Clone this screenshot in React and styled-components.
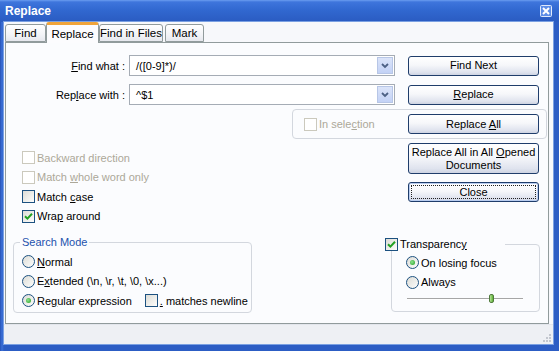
import React from "react";
import styled, { createGlobalStyle } from "styled-components";

const Global = createGlobalStyle`
  html, body { margin: 0; padding: 0; background: #fff; }
  body {
    font-family: "Liberation Sans", Arial, sans-serif;
    font-size: 11px;
    color: #000;
    white-space: nowrap;
  }
`;

const Window = styled.div`
  width: 559px;
  height: 351px;
  display: flex;
  flex-direction: column;
  overflow: hidden;
  background: #2c5dc4;
`;

const TitleBar = styled.div`
  height: 22px;
  flex: none;
  display: flex;
  align-items: center;
  justify-content: space-between;
  padding: 0 7px 0 5px;
  background: linear-gradient(#6b9df0 0, #3e75dc 2px, #3168d0 10px, #2a5bc1 100%);
  color: #fff;
  font-weight: bold;
  font-size: 12px;
`;

const Frame = styled.div`
  flex: 1;
  min-height: 0;
  display: flex;
  padding: 0 6px 7px 4px;
  background: linear-gradient(90deg, #2652b6 0, #3b70d8 2px, #2c5dc4 4px);
`;

const Client = styled.div`
  flex: 1;
  display: flex;
  flex-direction: column;
  background: #f7f8fb;
  box-shadow: 0 0 0 1px #7aa0e2;
`;

const TabStrip = styled.div`
  height: 20px;
  flex: none;
  display: flex;
  align-items: flex-end;
  padding-left: 1px;
  position: relative;
  z-index: 1;
`;

const Tab = styled.div`
  width: ${(p) => p.$w}px;
  height: ${(p) => (p.$active ? 21 : 18)}px;
  margin-bottom: ${(p) => (p.$active ? -1 : 0)}px;
  margin-right: ${(p) => p.$gap || 0}px;
  box-sizing: border-box;
  border: 1px solid #919b9c;
  border-bottom: ${(p) => (p.$active ? "none" : "1px solid #919b9c")};
  border-top: ${(p) => (p.$active ? "3px solid #f0a43a" : "1px solid #919b9c")};
  border-radius: 3px 3px 0 0;
  background: ${(p) => (p.$active ? "#fcfcfe" : "linear-gradient(#ffffff, #f3f4f7 60%, #e6e8ee)")};
  display: flex;
  align-items: center;
  justify-content: center;
  font-size: 11.5px;
  padding-bottom: ${(p) => (p.$active ? 1 : 0)}px;
`;

const Panel = styled.div`
  height: 282px;
  box-sizing: border-box;
  margin: 0 4px 0 1px;
  border: 1px solid #919b9c;
  background: #fbfcfe;
  padding-top: 12px;
  display: flex;
  flex-direction: column;
`;

const Row = styled.div`
  display: flex;
  align-items: center;
  height: 21px;
  margin-top: ${(p) => p.$top || 0}px;
`;

const Label = styled.div`
  width: 119px;
  margin-right: 4px;
  text-align: right;
  flex: none;
`;

const Key = styled.span`
  text-decoration: underline;
`;

const Combo = styled.div`
  width: 266px;
  height: 21px;
  box-sizing: border-box;
  border: 1px solid #a5acb5;
  background: #fff;
  display: flex;
  flex: none;
`;

const ComboText = styled.div`
  flex: 1;
  padding-left: 6px;
  display: flex;
  align-items: center;
`;

const ComboArrow = styled.div`
  width: 16px;
  margin: 1px;
  box-sizing: border-box;
  border: 1px solid #b7c6e6;
  background: linear-gradient(#dbe4f9, #c3d2f6);
  display: flex;
  align-items: center;
  justify-content: center;
`;

const Button = styled.div`
  width: 131px;
  height: ${(p) => p.$h || 20}px;
  margin-left: ${(p) => p.$left ?? 13}px;
  flex: none;
  box-sizing: border-box;
  border: 1px solid #1f3d6b;
  border-radius: 3px;
  background: linear-gradient(#ffffff, #f6f7fa 45%, #dfe3ee 85%, #cdd3e2);
  display: flex;
  align-items: center;
  justify-content: center;
  text-align: center;
  line-height: 13px;
  ${(p) =>
    p.$focus &&
    `
    box-shadow: inset 0 0 0 1px #b9cdf0;
    outline: 1px dotted #222;
    outline-offset: -4px;
  `}
`;

const SelGroup = styled.div`
  margin: 4px 0 0 286px;
  width: 255px;
  height: 30px;
  box-sizing: border-box;
  border: 1px solid #d3d7de;
  border-radius: 4px;
  display: flex;
  align-items: center;
  justify-content: space-between;
  padding: 0 7px 0 11px;
`;

const Options = styled.div`
  display: flex;
  margin-top: 4px;
  height: 83px;
`;

const CheckCol = styled.div`
  flex: 1;
  padding: 5px 0 0 16px;
`;

const ButtonCol = styled.div`
  width: 131px;
  margin-right: 9px;
  display: flex;
  flex-direction: column;
  gap: 8px;
`;

const Item = styled.div`
  display: flex;
  align-items: center;
  height: 19.5px;
  gap: 2px;
  color: ${(p) => (p.$disabled ? "#aca899" : "#000")};
  margin-left: ${(p) => p.$left || 0}px;
`;

const Box = styled.span`
  width: 13px;
  height: 13px;
  flex: none;
  box-sizing: border-box;
  border: 1px solid ${(p) => (p.$disabled ? "#cbc9bd" : "#1c5180")};
  background: ${(p) => (p.$disabled ? "#fff" : "linear-gradient(135deg, #dcdcd6, #fdfdfc)")};
  display: flex;
  align-items: center;
  justify-content: center;
`;

const Radio = styled.span`
  width: 13px;
  height: 13px;
  flex: none;
  box-sizing: border-box;
  border-radius: 50%;
  border: 1px solid #1c5180;
  background: linear-gradient(135deg, #dcdcd6, #fdfdfc);
  display: flex;
  align-items: center;
  justify-content: center;
`;

const Dot = styled.span`
  width: 5px;
  height: 5px;
  border-radius: 50%;
  background: radial-gradient(circle at 40% 40%, #8fe28f, #1f9f1f);
`;

const Bottom = styled.div`
  display: flex;
  align-items: flex-start;
  margin-top: 10px;
`;

const Group = styled.fieldset`
  margin: ${(p) => p.$margin};
  width: ${(p) => p.$w}px;
  box-sizing: border-box;
  border: 1px solid #d3d7de;
  border-radius: 4px;
  padding: ${(p) => p.$pad};
  min-width: 0;
`;

const Legend = styled.legend`
  padding: 0 2px;
  margin-left: -2px;
  color: #2352ad;
  line-height: 13px;
`;

const CheckLegend = styled.legend`
  padding: 0;
  margin-left: -21px;
  width: 120px;
  line-height: 13px;
  display: flex;
  align-items: center;
  gap: 2px;
`;

const Slider = styled.div`
  width: 116px;
  height: 14px;
  margin-left: 1px;
  position: relative;
  display: flex;
  align-items: center;
`;

const Track = styled.div`
  flex: 1;
  height: 0;
  border-top: 1px solid #a6a6a6;
  border-bottom: 1px solid #fff;
`;

const Thumb = styled.div`
  position: absolute;
  left: 82px;
  top: 2px;
  width: 5px;
  height: 9px;
  box-sizing: border-box;
  border: 1px solid #4f7a3c;
  border-radius: 2px;
  background: linear-gradient(90deg, #b7e39a, #5cb135);
`;

const StatusBar = styled.div`
  flex: 1;
  display: flex;
  justify-content: flex-end;
  align-items: flex-end;
  background: #eef0f4;
  border-top: 1px solid #e3e6ec;
  padding: 0 1px 1px 0;
`;

const Check = () => (
  <svg width="9" height="9" viewBox="0 0 9 9">
    <path d="M1 4.2 L3.4 6.6 L8 1.8" fill="none" stroke="#21a121" strokeWidth="2" />
  </svg>
);

const Chevron = () => (
  <svg width="8" height="6" viewBox="0 0 8 6">
    <path d="M1 1 L4 4 L7 1" fill="none" stroke="#4d6185" strokeWidth="1.8" />
  </svg>
);

const CloseIcon = () => (
  <svg width="12" height="12" viewBox="0 0 12 12">
    <rect x="0.5" y="0.5" width="11" height="11" rx="1" fill="#5d8de6" stroke="#dfe9fb" />
    <path d="M3 3 L9 9 M9 3 L3 9" stroke="#fff" strokeWidth="2" />
  </svg>
);

const Grip = () => (
  <svg width="10" height="10" viewBox="0 0 10 10">
    {[
      [8, 2],
      [5, 5],
      [8, 5],
      [2, 8],
      [5, 8],
      [8, 8],
    ].map(([x, y]) => (
      <rect key={`${x}-${y}`} x={x - 1} y={y - 1} width="2" height="2" fill="#c3c7cf" />
    ))}
  </svg>
);

export default function App() {
  return (
    <Window>
      <Global />
      <TitleBar>
        <span>Replace</span>
        <CloseIcon />
      </TitleBar>
      <Frame>
        <Client>
          <TabStrip>
            <Tab $w={41}>Find</Tab>
            <Tab $w={53} $active>
              Replace
            </Tab>
            <Tab $w={64} $gap={2}>
              Find in Files
            </Tab>
            <Tab $w={39}>Mark</Tab>
          </TabStrip>
          <Panel>
            <Row>
              <Label>
                <Key>F</Key>ind what :
              </Label>
              <Combo>
                <ComboText>/([0-9]*)/</ComboText>
                <ComboArrow>
                  <Chevron />
                </ComboArrow>
              </Combo>
              <Button>Find Next</Button>
            </Row>
            <Row $top={8}>
              <Label>
                Rep<Key>l</Key>ace with :
              </Label>
              <Combo>
                <ComboText>^$1</ComboText>
                <ComboArrow>
                  <Chevron />
                </ComboArrow>
              </Combo>
              <Button>
                <span>
                  <Key>R</Key>eplace
                </span>
              </Button>
            </Row>
            <SelGroup>
              <Item $disabled>
                <Box $disabled />
                <span>
                  In sele<Key>c</Key>tion
                </span>
              </Item>
              <Button $left={0}>
                <span>
                  Replace <Key>A</Key>ll
                </span>
              </Button>
            </SelGroup>
            <Options>
              <CheckCol>
                <Item $disabled>
                  <Box $disabled />
                  <span>Backward direction</span>
                </Item>
                <Item $disabled>
                  <Box $disabled />
                  <span>
                    Match <Key>w</Key>hole word only
                  </span>
                </Item>
                <Item>
                  <Box />
                  <span>
                    Match <Key>c</Key>ase
                  </span>
                </Item>
                <Item>
                  <Box>
                    <Check />
                  </Box>
                  <span>
                    Wra<Key>p</Key> around
                  </span>
                </Item>
              </CheckCol>
              <ButtonCol>
                <Button $left={0} $h={31}>
                  <span>
                    Replace All in All <Key>O</Key>pened
                    <br />
                    Documents
                  </span>
                </Button>
                <Button $left={0} $focus>
                  Close
                </Button>
              </ButtonCol>
            </Options>
            <Bottom>
              <Group $margin="0 0 0 7px" $w={239} $pad="3px 0 1px 8px">
                <Legend>Search Mode</Legend>
                <Item>
                  <Radio />
                  <span>
                    <Key>N</Key>ormal
                  </span>
                </Item>
                <Item>
                  <Radio />
                  <span>
                    E<Key>x</Key>tended (\n, \r, \t, \0, \x...)
                  </span>
                </Item>
                <Item>
                  <Radio>
                    <Dot />
                  </Radio>
                  <span>
                    Re<Key>g</Key>ular expression
                  </span>
                  <Item $left={11}>
                    <Box />
                    <span>
                      <Key>.</Key> matches newline
                    </span>
                  </Item>
                </Item>
              </Group>
              <Group $margin="2px 8px 0 auto" $w={149} $pad="2px 0 5px 14px">
                <CheckLegend>
                  <Box>
                    <Check />
                  </Box>
                  <span>
                    Transparenc<Key>y</Key>
                  </span>
                </CheckLegend>
                <Item>
                  <Radio>
                    <Dot />
                  </Radio>
                  <span>On losing focus</span>
                </Item>
                <Item>
                  <Radio />
                  <span>Always</span>
                </Item>
                <Slider>
                  <Track />
                  <Thumb />
                </Slider>
              </Group>
            </Bottom>
          </Panel>
          <StatusBar>
            <Grip />
          </StatusBar>
        </Client>
      </Frame>
    </Window>
  );
}
